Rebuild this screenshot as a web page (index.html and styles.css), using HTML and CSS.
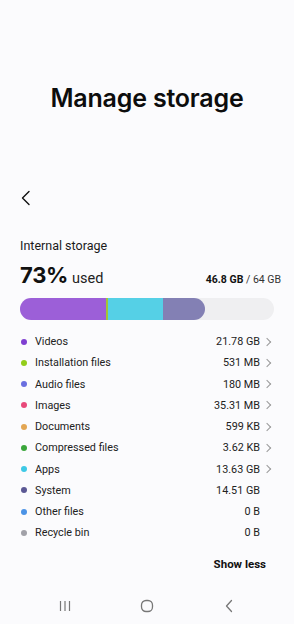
FILE: index.html
```html
<!DOCTYPE html>
<html>
<head>
<meta charset="utf-8">
<link rel="stylesheet" href="styles.css">
</head>
<body>
<div class="screen">
  <h1 class="title">Manage storage</h1>
  <div class="back">
    <svg width="12" height="16" viewBox="0 0 12 16"><path d="M9 1.5 L2.5 8 L9 14.5" fill="none" stroke="#111" stroke-width="1.4" stroke-linecap="round" stroke-linejoin="round"/></svg>
  </div>
  <div class="section-label">Internal storage</div>
  <div class="usage">
    <div class="pct"><span class="big">73%</span><span class="used">used</span></div>
    <div class="amount"><b>46.8 GB</b> / 64 GB</div>
  </div>
  <div class="bar">
    <div class="seg" style="width:86px;background:#9c5fd8"></div>
    <div class="seg" style="width:2px;background:#a3c536"></div>
    <div class="seg" style="width:55px;background:#55d0e6"></div>
    <div class="seg last" style="width:42px;background:#8380b4"></div>
  </div>
  <ul class="list">
    <li class="row"><span class="dot" style="background:#7f3fd1"></span><span class="name">Videos</span><span class="val">21.78 GB</span><span class="chev"></span></li>
    <li class="row"><span class="dot" style="background:#93cd1b"></span><span class="name">Installation files</span><span class="val">531 MB</span><span class="chev"></span></li>
    <li class="row"><span class="dot" style="background:#6a6fe0"></span><span class="name">Audio files</span><span class="val">180 MB</span><span class="chev"></span></li>
    <li class="row"><span class="dot" style="background:#e8497a"></span><span class="name">Images</span><span class="val">35.31 MB</span><span class="chev"></span></li>
    <li class="row"><span class="dot" style="background:#e3a653"></span><span class="name">Documents</span><span class="val">599 KB</span><span class="chev"></span></li>
    <li class="row"><span class="dot" style="background:#3aa63b"></span><span class="name">Compressed files</span><span class="val">3.62 KB</span><span class="chev"></span></li>
    <li class="row"><span class="dot" style="background:#3ec9e6"></span><span class="name">Apps</span><span class="val">13.63 GB</span><span class="chev"></span></li>
    <li class="row"><span class="dot" style="background:#5b5894"></span><span class="name">System</span><span class="val">14.51 GB</span><span class="chev none"></span></li>
    <li class="row"><span class="dot" style="background:#4b93e6"></span><span class="name">Other files</span><span class="val">0 B</span><span class="chev none"></span></li>
    <li class="row"><span class="dot" style="background:#a1a1a8"></span><span class="name">Recycle bin</span><span class="val">0 B</span><span class="chev none"></span></li>
  </ul>
  <div class="show-less">Show less</div>
  <div class="navbar">
    <svg width="14" height="12" viewBox="0 0 14 12"><path d="M2.5 1v10M7 1v10M11.5 1v10" stroke="#777" stroke-width="1.2"/></svg>
    <svg width="14" height="14" viewBox="0 0 14 14"><rect x="1.5" y="1.5" width="11" height="11" rx="4.5" fill="none" stroke="#777" stroke-width="1.3"/></svg>
    <svg width="14" height="14" viewBox="0 0 14 14"><path d="M9.5 1.5 L4.5 7 L9.5 12.5" fill="none" stroke="#777" stroke-width="1.3" stroke-linecap="round" stroke-linejoin="round"/></svg>
  </div>
</div>
</body>
</html>
```
FILE: styles.css
```css
* { box-sizing: border-box; }
html, body { margin: 0; padding: 0; }
body {
  background: #fbfbfd;
  font-family: Roboto, "Noto Sans", "Liberation Sans", sans-serif;
  color: #111;
  width: 294px;
  height: 624px;
  overflow: hidden;
}
.screen {
  display: flex;
  flex-direction: column;
  height: 624px;
}
.title {
  margin: 81px 0 0;
  text-align: center;
  font-family: Inter, Roboto, sans-serif;
  font-size: 25px;
  font-weight: 600;
  letter-spacing: -0.2px;
  line-height: 34px;
  color: #0d0d0d;
}
.back {
  margin: 75px 0 0 20px;
  height: 16px;
  display: flex;
}
.section-label {
  margin: 32px 0 0 20px;
  font-size: 12.5px;
  line-height: 16px;
  color: #1a1a1a;
}
.usage {
  margin: 7px 13px 0 20px;
  display: flex;
  justify-content: space-between;
  align-items: baseline;
}
.pct { display: flex; align-items: baseline; }
.big {
  font-family: Inter, Roboto, sans-serif;
  font-size: 22px;
  font-weight: 700;
  line-height: 28px;
  letter-spacing: -0.3px;
}
.used {
  font-size: 14.5px;
  margin-left: 4px;
  color: #222;
}
.amount {
  font-size: 10.5px;
  color: #333;
}
.amount b { font-weight: 700; color: #111; }
.bar {
  margin: 9px 20px 0 20px;
  height: 22px;
  border-radius: 11px;
  background: #efeff1;
  display: flex;
  overflow: hidden;
}
.seg { height: 100%; }
.seg.last { border-radius: 0 11px 11px 0; }
.list {
  list-style: none;
  margin: 11px 0 0 0;
  padding: 0 20px 0 20px;
}
.row {
  display: flex;
  align-items: center;
  height: 21.25px;
  font-size: 10.8px;
  color: #222;
}
.dot {
  width: 6px;
  height: 6px;
  border-radius: 50%;
  margin: 0 8px 0 1px;
  flex: none;
}
.name { flex: 1; }
.val { text-align: right; }
.chev {
  width: 11px;
  height: 10px;
  margin-left: 3px;
  position: relative;
}
.chev::after {
  content: "";
  position: absolute;
  left: 1px;
  top: 2px;
  width: 5px;
  height: 5px;
  border-top: 1px solid #999;
  border-right: 1px solid #999;
  transform: rotate(45deg);
}
.chev.none::after { display: none; }
.show-less {
  margin: 13px 28px 0 0;
  text-align: right;
  font-size: 11.5px;
  font-weight: 700;
  color: #111;
}
.navbar {
  margin-top: auto;
  height: 36px;
  display: flex;
  justify-content: center;
  align-items: center;
  gap: 68px;
}
```
